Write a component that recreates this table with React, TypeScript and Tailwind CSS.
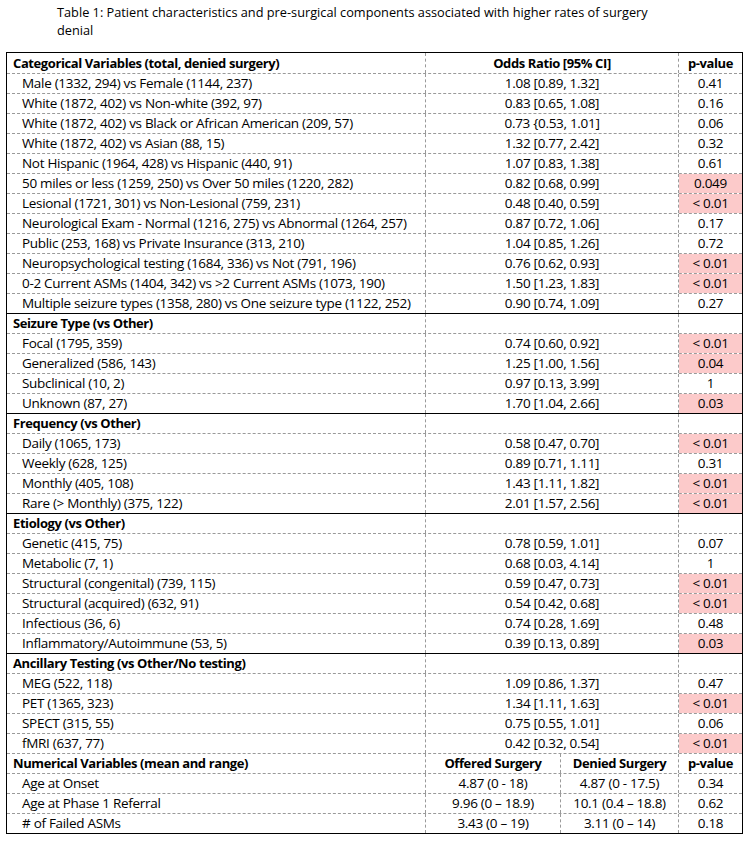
const PINK = 'bg-[#fccaca]'

type Row =
  | { kind: 'head'; label: string; c2?: string; c3?: string; first?: boolean }
  | { kind: 'data'; label: string; or: string; p: string; sig?: boolean }
  | { kind: 'numhead'; label: string }
  | { kind: 'num'; label: string; offered: string; denied: string; p: string }

const rows: Row[] = [
  { kind: 'head', label: 'Categorical Variables (total, denied surgery)', c2: 'Odds Ratio [95% CI]', c3: 'p-value', first: true },
  { kind: 'data', label: 'Male (1332, 294) vs Female (1144, 237)', or: '1.08 [0.89, 1.32]', p: '0.41' },
  { kind: 'data', label: 'White (1872, 402) vs Non-white (392, 97)', or: '0.83 [0.65, 1.08]', p: '0.16' },
  { kind: 'data', label: 'White (1872, 402) vs Black or African American (209, 57)', or: '0.73 {0.53, 1.01]', p: '0.06' },
  { kind: 'data', label: 'White (1872, 402) vs Asian (88, 15)', or: '1.32 [0.77, 2.42]', p: '0.32' },
  { kind: 'data', label: 'Not Hispanic (1964, 428) vs Hispanic (440, 91)', or: '1.07 [0.83, 1.38]', p: '0.61' },
  { kind: 'data', label: '50 miles or less (1259, 250) vs Over 50 miles (1220, 282)', or: '0.82 [0.68, 0.99]', p: '0.049', sig: true },
  { kind: 'data', label: 'Lesional (1721, 301) vs Non-Lesional (759, 231)', or: '0.48 [0.40, 0.59]', p: '< 0.01', sig: true },
  { kind: 'data', label: 'Neurological Exam - Normal (1216, 275) vs Abnormal (1264, 257)', or: '0.87 [0.72, 1.06]', p: '0.17' },
  { kind: 'data', label: 'Public (253, 168) vs Private Insurance (313, 210)', or: '1.04 [0.85, 1.26]', p: '0.72' },
  { kind: 'data', label: 'Neuropsychological testing (1684, 336) vs Not (791, 196)', or: '0.76 [0.62, 0.93]', p: '< 0.01', sig: true },
  { kind: 'data', label: '0-2 Current ASMs (1404, 342) vs >2 Current ASMs (1073, 190)', or: '1.50 [1.23, 1.83]', p: '< 0.01', sig: true },
  { kind: 'data', label: 'Multiple seizure types (1358, 280) vs One seizure type (1122, 252)', or: '0.90 [0.74, 1.09]', p: '0.27' },
  { kind: 'head', label: 'Seizure Type (vs Other)' },
  { kind: 'data', label: 'Focal (1795, 359)', or: '0.74 [0.60, 0.92]', p: '< 0.01', sig: true },
  { kind: 'data', label: 'Generalized (586, 143)', or: '1.25 [1.00, 1.56]', p: '0.04', sig: true },
  { kind: 'data', label: 'Subclinical (10, 2)', or: '0.97 [0.13, 3.99]', p: '1' },
  { kind: 'data', label: 'Unknown (87, 27)', or: '1.70 [1.04, 2.66]', p: '0.03', sig: true },
  { kind: 'head', label: 'Frequency (vs Other)' },
  { kind: 'data', label: 'Daily (1065, 173)', or: '0.58 [0.47, 0.70]', p: '< 0.01', sig: true },
  { kind: 'data', label: 'Weekly (628, 125)', or: '0.89 [0.71, 1.11]', p: '0.31' },
  { kind: 'data', label: 'Monthly (405, 108)', or: '1.43 [1.11, 1.82]', p: '< 0.01', sig: true },
  { kind: 'data', label: 'Rare (> Monthly) (375, 122)', or: '2.01 [1.57, 2.56]', p: '< 0.01', sig: true },
  { kind: 'head', label: 'Etiology (vs Other)' },
  { kind: 'data', label: 'Genetic (415, 75)', or: '0.78 [0.59, 1.01]', p: '0.07' },
  { kind: 'data', label: 'Metabolic (7, 1)', or: '0.68 [0.03, 4.14]', p: '1' },
  { kind: 'data', label: 'Structural (congenital) (739, 115)', or: '0.59 [0.47, 0.73]', p: '< 0.01', sig: true },
  { kind: 'data', label: 'Structural (acquired) (632, 91)', or: '0.54 [0.42, 0.68]', p: '< 0.01', sig: true },
  { kind: 'data', label: 'Infectious (36, 6)', or: '0.74 [0.28, 1.69]', p: '0.48' },
  { kind: 'data', label: 'Inflammatory/Autoimmune (53, 5)', or: '0.39 [0.13, 0.89]', p: '0.03', sig: true },
  { kind: 'head', label: 'Ancillary Testing (vs Other/No testing)' },
  { kind: 'data', label: 'MEG (522, 118)', or: '1.09 [0.86, 1.37]', p: '0.47' },
  { kind: 'data', label: 'PET (1365, 323)', or: '1.34 [1.11, 1.63]', p: '< 0.01', sig: true },
  { kind: 'data', label: 'SPECT (315, 55)', or: '0.75 [0.55, 1.01]', p: '0.06' },
  { kind: 'data', label: 'fMRI (637, 77)', or: '0.42 [0.32, 0.54]', p: '< 0.01', sig: true },
  { kind: 'numhead', label: 'Numerical Variables (mean and range)' },
  { kind: 'num', label: 'Age at Onset', offered: '4.87 (0 - 18)', denied: '4.87 (0 - 17.5)', p: '0.34' },
  { kind: 'num', label: 'Age at Phase 1 Referral', offered: '9.96 (0 – 18.9)', denied: '10.1 (0.4 – 18.8)', p: '0.62' },
  { kind: 'num', label: '# of Failed ASMs', offered: '3.43 (0 – 19)', denied: '3.11 (0 – 14)', p: '0.18' },
]

const divider = 'border-r border-dashed border-r-[#9a9a9a]'
const bold = 'font-bold text-[13px] tracking-[-0.4px]'

function TableRow({ row, first }: { row: Row; first: boolean }) {
  const section = row.kind === 'head' && !row.first
  const h = first ? 'h-[20px]' : 'h-[19px]'
  const top = first ? '' : section ? 'border-t border-black' : 'border-t border-dashed border-t-[#9a9a9a]'
  const c = `flex ${h} items-center whitespace-nowrap`

  return (
    <div className={`flex ${top}`}>
      {row.kind === 'head' && (
        <>
          <div className={`${c} ${divider} ${bold} w-[419px] pl-[6px]`}>{row.label}</div>
          <div className={`${c} ${divider} ${bold} w-[253px] justify-center`}>{row.c2}</div>
          <div className={`${c} ${bold} w-[63px] justify-center`}>{row.c3}</div>
        </>
      )}
      {row.kind === 'data' && (
        <>
          <div className={`${c} ${divider} w-[419px] pl-[15px]`}>{row.label}</div>
          <div className={`${c} ${divider} w-[253px] justify-center`}>{row.or}</div>
          <div className={`${c} w-[63px] justify-center ${row.sig ? PINK : ''}`}>{row.p}</div>
        </>
      )}
      {row.kind === 'numhead' && (
        <>
          <div className={`${c} ${divider} ${bold} w-[419px] pl-[6px]`}>{row.label}</div>
          <div className={`${c} ${divider} ${bold} w-[135px] justify-center`}>Offered Surgery</div>
          <div className={`${c} ${divider} ${bold} w-[118px] justify-center`}>Denied Surgery</div>
          <div className={`${c} ${bold} w-[63px] justify-center`}>p-value</div>
        </>
      )}
      {row.kind === 'num' && (
        <>
          <div className={`${c} ${divider} w-[419px] pl-[15px]`}>{row.label}</div>
          <div className={`${c} ${divider} w-[135px] justify-center`}>{row.offered}</div>
          <div className={`${c} ${divider} w-[118px] justify-center`}>{row.denied}</div>
          <div className={`${c} w-[63px] justify-center`}>{row.p}</div>
        </>
      )}
    </div>
  )
}

export default function App() {
  return (
    <div className="min-h-[843px] w-[753px] bg-white font-['Open_Sans',sans-serif] text-black">
      <p className="w-[650px] pl-[57px] pt-[3px] text-[12.75px] leading-[18px]">
        Table 1: Patient characteristics and pre-surgical components associated with higher rates of surgery denial
      </p>
      <div className="ml-[6px] mt-[13px] w-[737px] border border-black text-[13.5px] leading-none tracking-[-0.3px]">
        {rows.map((r, i) => (
          <TableRow key={i} row={r} first={i === 0} />
        ))}
      </div>
    </div>
  )
}
